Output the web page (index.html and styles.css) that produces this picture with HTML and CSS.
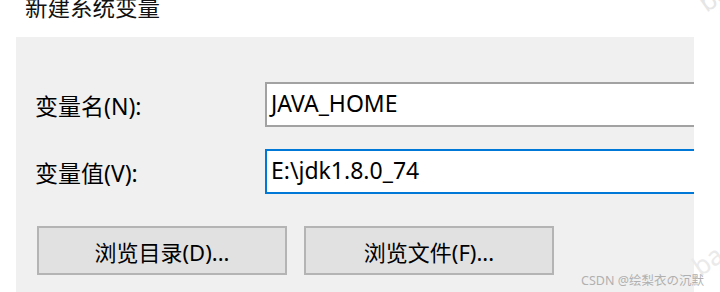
FILE: index.html
```html
<!DOCTYPE html>
<html lang="zh-CN">
<head>
<meta charset="utf-8">
<title>新建系统变量</title>
<link rel="stylesheet" href="styles.css">
</head>
<body>
<div class="dialog">
  <div class="title">新建系统变量</div>
  <div class="panel">
    <div class="form">
      <label class="label">变量名(N):</label>
      <div class="field">JAVA_HOME</div>
      <label class="label">变量值(V):</label>
      <div class="field focused">E:\jdk1.8.0_74</div>
    </div>
    <div class="buttons">
      <div class="btn">浏览目录(D)...</div>
      <div class="btn">浏览文件(F)...</div>
    </div>
  </div>
  <div class="wm wm-top">ba</div>
  <div class="wm wm-side">ba</div>
  <div class="credit">CSDN @绘梨衣の沉默</div>
</div>
</body>
</html>
```
FILE: styles.css
```css
* { box-sizing: border-box; }
html, body { margin: 0; padding: 0; background: #ffffff; }
body {
  width: 720px;
  height: 292px;
  overflow: hidden;
  font-family: "Noto Sans", "Noto Sans CJK SC", sans-serif;
  color: #000;
}
.dialog {
  position: relative;
  width: 720px;
  height: 292px;
  overflow: hidden;
}
.title {
  margin: -4px 0 0 25px;
  height: 41px;
  font-size: 22.5px;
  line-height: 24px;
  color: #111;
}
.panel {
  margin-left: 16px;
  width: 678px;
  height: 255px;
  background: #f0f0f0;
  padding-top: 45px;
  overflow: hidden;
}
.form {
  display: grid;
  grid-template-columns: 249px 1fr;
  row-gap: 22px;
  align-items: center;
}
.label {
  padding-left: 19px;
  padding-top: 2px;
  font-size: 23px;
  line-height: 26px;
  color: #000;
}
.field {
  height: 45px;
  background: #fff;
  border: 2px solid #a2a2a2;
  border-right: none;
  padding-left: 4px;
  font-size: 23px;
  line-height: 39px;
  color: #000;
}
.field.focused { border-color: #0078d7; }
.buttons {
  display: flex;
  gap: 17px;
  margin-top: 32px;
  padding-left: 21px;
}
.btn {
  width: 250px;
  height: 49px;
  background: #e1e1e1;
  border: 2px solid #b4b4b4;
  display: flex;
  align-items: center;
  justify-content: center;
  font-size: 22px;
  color: #000;
}
.credit {
  position: absolute;
  left: 581px;
  top: 274px;
  font-size: 12.5px;
  line-height: 14px;
  color: #b0b0b0;
  white-space: nowrap;
}
.wm {
  position: absolute;
  font-size: 26px;
  color: #e6e6e6;
  transform: rotate(-35deg);
}
.wm-top { left: 698px; top: -22px; }
.wm-side { left: 692px; top: 242px; color: #eaeaea; }
```
